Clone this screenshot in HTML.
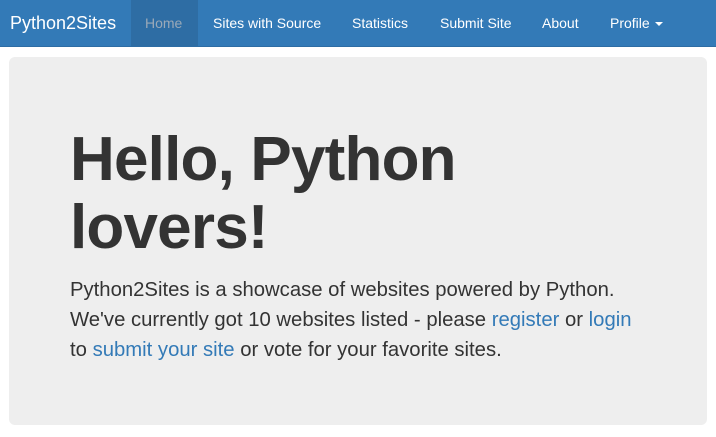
<!DOCTYPE html>
<html><head><style>
*{margin:0;padding:0;box-sizing:border-box}
body{width:716px;height:437px;background:#fff;font-family:"Liberation Sans",Arial,sans-serif;overflow:hidden;position:relative;color:#333}
.nav{position:absolute;left:0;top:0;width:716px;height:47px;background:#337ab7;border-bottom:1px solid #2e6da4}
.nav span{position:absolute;top:0;line-height:46px;color:#fff;font-size:14px;white-space:nowrap}
.brand{font-size:18px!important}
.active{background:#2e6da4;color:#9aa9b8!important;padding:0 14px}
.caret{display:inline-block;width:0;height:0;border-left:4px solid transparent;border-right:4px solid transparent;border-top:4px solid #fff;vertical-align:middle;margin-left:5px}
.jumbo{position:absolute;left:9px;top:57px;width:698px;height:368px;background:#eee;border-radius:6px}
h1{position:absolute;left:70px;top:126px;font-size:62px;line-height:68px;font-weight:bold;color:#333;letter-spacing:-0.8px;white-space:nowrap}
p{position:absolute;left:70px;top:275px;font-size:20.3px;line-height:30px;width:640px;color:#333;white-space:nowrap}
a{color:#337ab7;text-decoration:none}
</style></head><body>
<div class="nav">
<span class="brand" style="left:10px">Python2Sites</span>
<span class="active" style="left:131px;width:67px;height:46px">Home</span>
<span style="left:213px">Sites with Source</span>
<span style="left:352px">Statistics</span>
<span style="left:440px">Submit Site</span>
<span style="left:542px">About</span>
<span style="left:610px">Profile<i class="caret"></i></span>
</div>
<div class="jumbo"></div>
<h1>Hello, Python<br>lovers!</h1>
<p>Python2Sites is a showcase of websites powered by Python.<br>We've currently got 10 websites listed - please <a>register</a> or <a>login</a><br>to <a>submit your site</a> or vote for your favorite sites.</p>
</body></html>
